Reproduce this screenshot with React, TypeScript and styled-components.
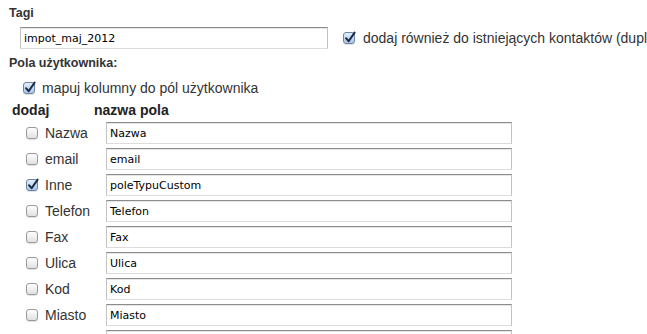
import styled, { createGlobalStyle } from 'styled-components';

const GlobalStyle = createGlobalStyle`
  body {
    margin: 0;
    background: #fff;
    overflow: hidden;
    font-family: "Liberation Sans", Arial, sans-serif;
    color: #333;
  }
`;

const Page = styled.div`
  padding-left: 9px;
  width: 638px;
  height: 334px;
  overflow: hidden;
  white-space: nowrap;
`;

const SectionTitle = styled.div`
  height: 26px;
  line-height: 26px;
  font-size: 12.5px;
  font-weight: bold;
  color: #333;
`;

const TagRow = styled.div`
  display: flex;
  align-items: center;
  margin-top: 1px;
  height: 22px;
`;

const TextField = styled.input<{ $width: number }>`
  box-sizing: border-box;
  flex: none;
  width: ${({ $width }) => $width}px;
  height: 22px;
  padding: 0 3px;
  border: 1px solid #c2c2c2;
  border-top-color: #8c8c8c;
  border-bottom-color: #dcdcdc;
  box-shadow: inset 0 1px 0 #e6e6e6;
  border-radius: 0;
  outline: none;
  background: #fff;
  font-family: "DejaVu Sans", Verdana, sans-serif;
  font-size: 11px;
  color: #000;
`;

const CheckLabel = styled.label<{ $gap: number }>`
  display: flex;
  flex: none;
  align-items: center;
  gap: ${({ $gap }) => $gap}px;
  font-size: 14px;
  color: #333;
`;

const Box = styled.span<{ $checked: boolean }>`
  position: relative;
  display: inline-block;
  box-sizing: border-box;
  width: 12px;
  height: 12px;
  flex: none;
  border: 1px solid ${({ $checked }) => ($checked ? '#6f86a3' : '#9a9a9a')};
  border-radius: 3px;
  background: ${({ $checked }) =>
    $checked
      ? 'linear-gradient(#e3eefa, #a8c6e8)'
      : 'linear-gradient(#ffffff, #e1e1e1)'};
  box-shadow: 0 1px 1px rgba(0, 0, 0, 0.12);

  svg {
    position: absolute;
    left: 0;
    top: -2px;
  }
`;

const Checkbox = ({ checked = false }: { checked?: boolean }) => (
  <Box $checked={checked}>
    {checked && (
      <svg width="12" height="13" viewBox="0 0 12 13">
        <path
          d="M2 7.2 L4.6 10.2 L10.6 1.6"
          fill="none"
          stroke="#1a2a44"
          strokeWidth="2"
          strokeLinecap="round"
          strokeLinejoin="round"
        />
      </svg>
    )}
  </Box>
);

const MapRow = styled.div`
  display: flex;
  align-items: center;
  height: 24px;
  padding-left: 14px;
`;

const HeaderRow = styled.div`
  display: grid;
  grid-template-columns: 82px auto;
  height: 20px;
  line-height: 20px;
  padding-left: 3px;
  font-size: 14px;
  font-weight: bold;
  color: #222;
`;

const FieldTable = styled.div`
  display: flex;
  flex-direction: column;
  gap: 4px;
  margin-top: 2px;
`;

const FieldRow = styled.div`
  display: grid;
  grid-template-columns: 80px auto;
  align-items: center;
  height: 22px;
  padding-left: 17px;
`;

const fields = [
  { label: 'Nazwa', value: 'Nazwa', checked: false },
  { label: 'email', value: 'email', checked: false },
  { label: 'Inne', value: 'poleTypuCustom', checked: true },
  { label: 'Telefon', value: 'Telefon', checked: false },
  { label: 'Fax', value: 'Fax', checked: false },
  { label: 'Ulica', value: 'Ulica', checked: false },
  { label: 'Kod', value: 'Kod', checked: false },
  { label: 'Miasto', value: 'Miasto', checked: false },
];

const App = () => (
  <Page>
    <GlobalStyle />
    <SectionTitle>Tagi</SectionTitle>
    <TagRow>
      <TextField $width={308} style={{ marginLeft: 11 }} defaultValue="impot_maj_2012" />
      <CheckLabel $gap={8} style={{ marginLeft: 15 }}>
        <Checkbox checked />
        dodaj również do istniejących kontaktów (duplikaty)
      </CheckLabel>
    </TagRow>
    <SectionTitle style={{ marginTop: 1 }}>Pola użytkownika:</SectionTitle>
    <MapRow>
      <CheckLabel $gap={7}>
        <Checkbox checked />
        mapuj kolumny do pól użytkownika
      </CheckLabel>
    </MapRow>
    <HeaderRow>
      <span>dodaj</span>
      <span>nazwa pola</span>
    </HeaderRow>
    <FieldTable>
      {fields.map((f) => (
        <FieldRow key={f.label}>
          <CheckLabel $gap={7}>
            <Checkbox checked={f.checked} />
            {f.label}
          </CheckLabel>
          <TextField $width={406} defaultValue={f.value} />
        </FieldRow>
      ))}
      <FieldRow>
        <span />
        <TextField $width={406} defaultValue="" aria-label="Kraj" />
      </FieldRow>
    </FieldTable>
  </Page>
);

export default App;
